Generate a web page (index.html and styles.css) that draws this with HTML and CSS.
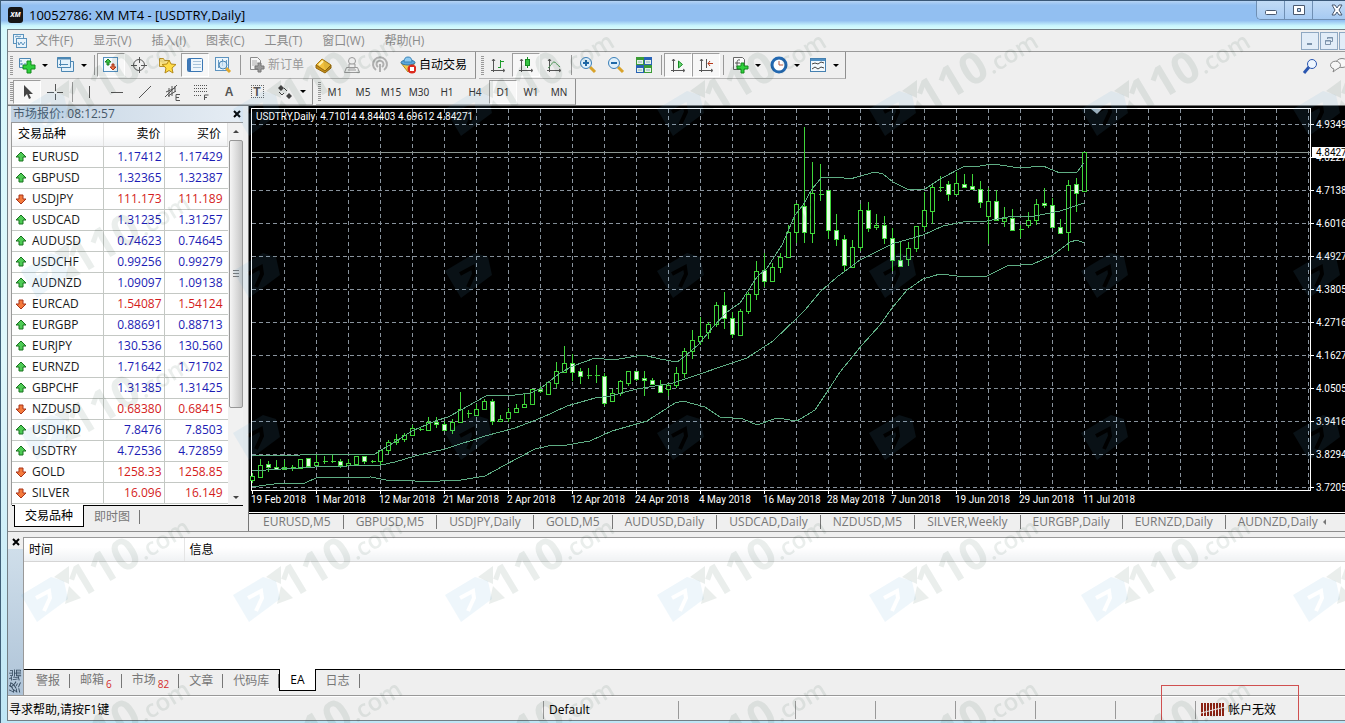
FILE: index.html
```html
<!DOCTYPE html>
<html lang="zh-CN">
<head>
    <meta charset="UTF-8">
    <meta name="viewport" content="width=device-width, initial-scale=1.0">
    <title>10052786: XM MT4 - [USDTRY,Daily]</title>
    <link rel="stylesheet" href="styles.css">
</head>
<body>
    <div class="window">
        <header class="titlebar">
            <span class="logo">XM</span>
            <h1>10052786: XM MT4 - [USDTRY,Daily]</h1>
            <div class="window-buttons">
                <button aria-label="最小化"><svg width="14" height="14"><rect x="1.500" y="7.500" width="11" height="4" rx="1" fill="#fff" stroke="#4b5a70"/></svg></button>
                <button aria-label="还原"><svg width="14" height="14"><path d="M1.500 2.500h11v9h-11zM5.500 5.500v3h3v-3z" fill="#fff" fill-rule="evenodd" stroke="#4b5a70"/></svg></button>
                <button class="wide" aria-label="关闭"><svg width="14" height="14"><path d="M2 2h3l2 3 2-3h3L9 7l3 5H9L7 9l-2 3H2l3-5z" fill="#fff" stroke="#4b5a70"/></svg></button>
            </div>
        </header>

        <div class="app">
            <nav class="menubar">
                <svg width="16" height="16" fill="#e8f3fb" stroke="#5b93bd"><rect x="1.500" y="1.500" width="10" height="9"/><rect x="4.500" y="5.500" width="10" height="9"/><path d="M3 4l2-1 2 1 2-1M6 9l1 3 2-3 2 3 2-3" fill="none"/></svg>
                <button>文件(F)</button>
                <button>显示(V)</button>
                <button>插入(I)</button>
                <button>图表(C)</button>
                <button>工具(T)</button>
                <button>窗口(W)</button>
                <button>帮助(H)</button>
                <div class="mdi-buttons">
                    <button aria-label="最小化图表"><svg width="12" height="12"><path d="M3 9h5" stroke="#7c93ab" stroke-width="2"/></svg></button>
                    <button aria-label="还原图表"><svg width="12" height="12" fill="none" stroke="#7c93ab"><path d="M4.500 4V2.500h5v4H8M2.500 5.500h5v4h-5zM2 6h6M4 3h6"/></svg></button>
                    <button aria-label="关闭图表"></button>
                </div>
            </nav>

            <div class="toolbar">
                <div class="group">
                    <i class="grip"></i>
                    <button class="tool" aria-label="新图表"><svg width="20" height="18"><path d="M2.500 2.500h11v9h-11z" fill="#eaf5fc" stroke="#4d87b3"/><path d="M4 4v6M4 8h8" stroke="#4d87b3" stroke-dasharray="2 1"/><path d="M10 5h4v4h4v4h-4v4h-4v-4H6V9h4z" fill="#2fd03c" stroke="#128a1c"/></svg></button>
                    <button class="arrow" aria-label="新图表列表"></button>
                    <button class="tool" aria-label="配置文件"><svg width="20" height="18" fill="#e3f1fb" stroke="#4d87b3"><path d="M5.500 5.500h12v10h-12z"/><path d="M1.500 1.500h13v10h-13z"/><path d="M1 2.500h14" stroke-width="2"/><path d="M4.500 4v6M3 8.500h9"/></svg></button>
                    <button class="arrow" aria-label="配置文件列表"></button>
                    <i class="sep"></i>
                    <button class="tool on" aria-label="市场报价"><svg width="18" height="18"><rect x="1.500" y="1.500" width="14" height="14" fill="#f4fafe" stroke="#5590bf"/><path d="M6 3l3 3H7v3H5V6H3z" fill="#3bc447" stroke="#16801f"/><path d="M11 14l3-3h-2V8h-2v3H8z" fill="#f4794a" stroke="#b5391a"/></svg></button>
                    <button class="tool" aria-label="数据窗口"><svg width="18" height="18" fill="none" stroke="#555"><circle cx="9" cy="9" r="5.500"/><path d="M9.500 1v6M9.500 11v6M1 9.500h6M11 9.500h6"/></svg></button>
                    <button class="tool" aria-label="导航"><svg width="20" height="18"><path d="M2.500 10.500v-8h4l1 2h5v6z" fill="#fce48a" stroke="#b9922b"/><path d="M12 4l2 4 5 .5-4 3.500 1 5-4-2.500L8 17l1-5-4-3.500 5-.5z" fill="#ffdc47" stroke="#b58a18"/></svg></button>
                    <button class="tool on" aria-label="终端"><svg width="18" height="16"><rect x="1.500" y="1.500" width="15" height="13" rx="1" fill="#eef6fc" stroke="#3a76b3"/><path d="M2 2h3v12H2z" fill="#3f78b8"/><path d="M7 4.500h8M7 7.500h8M7 10.500h8" stroke="#a8c3da"/></svg></button>
                    <button class="tool" aria-label="策略测试"><svg width="18" height="18"><rect x="1.500" y="1.500" width="13" height="13" fill="#edf6fc" stroke="#5d93bf"/><path d="M4.500 4v8M8.500 3v7M12.500 4v6" stroke="#6a9cc4"/><path d="M12 12l4 4" stroke="#e0a82e" stroke-width="3"/><circle cx="9" cy="9" r="4" fill="#cfe6f5" fill-opacity=".7" stroke="#4a86b5"/></svg></button>
                    <i class="sep"></i>
                    <button class="tool text off"><svg width="16" height="18"><path d="M1.500 1.500h7l3 3v9h-10z" fill="#f6f6f6" stroke="#8b8b8b"/><path d="M3 5h5M3 7h6M3 9h5" stroke="#aaa"/><path d="M9 7h3v3h3v3h-3v3H9v-3H6v-3h3z" fill="#9a9a9a" stroke="#777"/></svg>新订单</button>
                    <button class="tool" aria-label="编辑器"><svg width="18" height="18"><path d="M1 9l6-6 9 6-6 6z" fill="#f3c13d" stroke="#a97812"/><path d="M1 9v3l9 5 6-5V9l-6 6z" fill="#c78f1b" stroke="#95680d"/><path d="M4 9l4-4" stroke="#fff3b5" stroke-width="2"/></svg></button>
                    <button class="tool" aria-label="交易商店"><svg width="18" height="18" fill="#eee" stroke="#999"><circle cx="9" cy="5" r="3.500"/><path d="M6 8h6v4H6zM3.500 11.500h11l2 5h-15z"/><path d="M5 14h8"/></svg></button>
                    <button class="tool" aria-label="信号"><svg width="18" height="18" fill="none" stroke="#b0b0b0" stroke-width="2"><path d="M5 14a7 7 0 1 1 8 0"/><path d="M7 11a3.500 3.500 0 1 1 4 0M9 8v8"/></svg></button>
                    <button class="tool text"><svg width="16" height="18"><path d="M1 7l7 9 7-9z" fill="#f2c94c" stroke="#b48a20"/><ellipse cx="8" cy="6.500" rx="7" ry="2.500" fill="#5ba7dc" stroke="#2f75a8"/><path d="M4 6q0-5 4-5t4 5z" fill="#8ecaf0" stroke="#3a83b7"/><circle cx="12" cy="13" r="4.500" fill="#dc2b1f"/><rect x="10" y="11" width="4" height="4" fill="#fff"/></svg>自动交易</button>
                </div>
                <div class="group">
                    <i class="grip"></i>
                    <button class="tool" aria-label="柱状图"><svg width="18" height="18" fill="none" stroke="#555"><path d="M4.500 3v13M2 14.500h13M3 5l1.500-2L6 5M14 13l2 1.500-2 1.500"/><path d="M11.500 4v8M9 11.500h2M12 5.500h3" stroke="#1d9b2b"/></svg></button>
                    <button class="tool on" aria-label="蜡烛图"><svg width="18" height="18" fill="none" stroke="#555"><path d="M4.500 3v13M2 14.500h13M3 5l1.500-2L6 5M14 13l2 1.500-2 1.500"/><path d="M10.500 1v11" stroke="#168a22"/><rect x="8.500" y="3.500" width="4" height="6" fill="#35c442" stroke="#168a22"/></svg></button>
                    <button class="tool" aria-label="折线图"><svg width="18" height="18" fill="none" stroke="#555"><path d="M4.500 3v13M2 14.500h13M3 5l1.500-2L6 5M14 13l2 1.500-2 1.500"/><path d="M3 12c3-2 4-6 6-6s3 3 6 5" stroke="#4b9a55"/></svg></button>
                    <i class="sep"></i>
                    <button class="tool" aria-label="放大"><svg width="18" height="18"><path d="M11 11l5 5" stroke="#d9a32b" stroke-width="3"/><circle cx="7" cy="7" r="5.500" fill="#dff0fb" stroke="#3b7fb8"/><path d="M4 7h6M7 4v6" stroke="#1f69a8" stroke-width="2"/></svg></button>
                    <button class="tool" aria-label="缩小"><svg width="18" height="18"><path d="M11 11l5 5" stroke="#d9a32b" stroke-width="3"/><circle cx="7" cy="7" r="5.500" fill="#dff0fb" stroke="#3b7fb8"/><path d="M4 7h6" stroke="#1f69a8" stroke-width="2"/></svg></button>
                    <button class="tool" aria-label="平铺窗口"><svg width="18" height="18"><path d="M1 1h8v8H1zM9 9h8v8H9z" fill="#3b9b35"/><path d="M9 1h8v8H9zM1 9h8v8H1z" fill="#2862b5"/><path d="M2 4h6v4H2zM10 4h6v4h-6zM2 12h6v4H2zM10 12h6v4h-6z" fill="#e6f2e9"/><path d="M3 6h4M11 6h4M3 14h4M11 14h4" stroke="#8ab0b8"/></svg></button>
                    <i class="sep"></i>
                    <button class="tool on" aria-label="自动滚动"><svg width="18" height="18" fill="none" stroke="#555"><path d="M4.500 3v13M2 14.500h13M3 5l1.500-2L6 5M14 13l2 1.500-2 1.500"/><path d="M9.500 5v7l4-3.500z" fill="#6bd775" stroke="#168a22"/></svg></button>
                    <button class="tool on" aria-label="图表平移"><svg width="18" height="18" fill="none" stroke="#555"><path d="M4.500 3v13M2 14.500h13M3 5l1.500-2L6 5M14 13l2 1.500-2 1.500M9.500 3v9"/><path d="M16 7.500h-5M13 5l-2 2.500 2 2.500" stroke="#b5391a"/></svg></button>
                    <i class="sep"></i>
                    <button class="tool" aria-label="技术指标"><svg width="18" height="18"><path d="M2.500 1.500h9l2 2v10h-11z" fill="#fafafa" stroke="#666"/><path d="M9 4q-3-1-3 3v4M4 7h5" fill="none" stroke="#555"/><path d="M10 7h3v3h4v3h-4v4h-3v-4H6v-3h4z" fill="#2fd03c" stroke="#128a1c"/></svg></button>
                    <button class="arrow" aria-label="技术指标列表"></button>
                    <button class="tool" aria-label="时间周期"><svg width="18" height="18"><circle cx="9" cy="9" r="7" fill="#fff" stroke="#2368b0" stroke-width="3"/><path d="M9 5v4h4" fill="none" stroke="#b5543a"/></svg></button>
                    <button class="arrow" aria-label="时间周期列表"></button>
                    <button class="tool" aria-label="模板"><svg width="18" height="16"><rect x="1.500" y="1.500" width="15" height="13" fill="#f2f9fe" stroke="#4580b0"/><path d="M2 3h14" stroke="#4f90c4" stroke-width="2"/><path d="M3 7l3-1 3 1 3-2 3 1M3 12l3-2 3 2 3-2 3 1" fill="none" stroke="#444"/></svg></button>
                    <button class="arrow" aria-label="模板列表"></button>
                </div>
                <div class="corner-tools">
                    <button class="tool" aria-label="搜索"><svg width="18" height="18" fill="none" stroke="#2a56b0"><path d="M7 10l-5 6" stroke-width="3"/><circle cx="10" cy="7" r="4.500" fill="#eef6ff"/></svg></button>
                    <button class="tool" aria-label="聊天"><svg width="20" height="18" fill="#f7f7f7" stroke="#888"><ellipse cx="13" cy="6" rx="6" ry="4.500"/><path d="M4 15l1-3a5 4 0 1 1 3 0z"/></svg></button>
                </div>
            </div>

            <div class="toolbar">
                <div class="group">
                    <i class="grip"></i>
                    <button class="tool on" aria-label="光标"><svg width="18" height="18"><path d="M6 2v12l3-3 2 5 2-1-2-4h4z" fill="#444"/></svg></button>
                    <button class="tool" aria-label="十字准线"><svg width="18" height="18" stroke="#555"><path d="M9.500 1v7M9.500 11v6M1 9.500h7M11 9.500h6"/></svg></button>
                    <i class="sep"></i>
                    <button class="tool" aria-label="垂直线"><svg width="18" height="18"><path d="M9.500 3v12" stroke="#555"/></svg></button>
                    <button class="tool" aria-label="水平线"><svg width="18" height="18"><path d="M3 9.500h12" stroke="#555"/></svg></button>
                    <button class="tool" aria-label="趋势线"><svg width="18" height="18"><path d="M3 15L15 3" stroke="#555"/></svg></button>
                    <button class="tool" aria-label="等距通道"><svg width="20" height="18" fill="none" stroke="#555"><path d="M2 14L14 2M3 9l9-4M5 13l8-5M6 5v9M9 3v10M12 3v6"/><path d="M17 11.500h-4v6h4M13 14.500h3"/></svg></button>
                    <button class="tool" aria-label="斐波纳契"><svg width="18" height="18" fill="none" stroke="#555"><path d="M2 2.500h13M2 5.500h13M2 8.500h13M2 12.500h8" stroke-dasharray="1 1"/><path d="M12.500 17v-5h4M12 14.500h3"/></svg></button>
                    <button class="tool letter">A</button>
                    <button class="tool letter"><span class="boxed">T</span></button>
                    <button class="tool" aria-label="箭头"><svg width="18" height="18" fill="#444"><path d="M5 2l3 3-3 3-3-3zM13 10l3 3-3 3-3-3z"/><path d="M3 9l3 3 2-2M8 5l3 3" fill="none" stroke="#444"/></svg></button>
                    <button class="arrow" aria-label="箭头列表"></button>
                </div>
                <div class="group">
                    <i class="grip"></i>
                    <button class="tool period">M1</button>
                    <button class="tool period">M5</button>
                    <button class="tool period">M15</button>
                    <button class="tool period">M30</button>
                    <button class="tool period">H1</button>
                    <button class="tool period">H4</button>
                    <button class="tool period on">D1</button>
                    <button class="tool period">W1</button>
                    <button class="tool period">MN</button>
                </div>
            </div>

            <main class="workspace">
                <section class="market">
                    <div class="panel-title">
                        <h2>市场报价: 08:12:57</h2>
                        <button class="close" aria-label="关闭市场报价"><svg width="8" height="8"><path d="M1 1l6 6M7 1L1 7" stroke="#000" stroke-width="2"/></svg></button>
                    </div>
                    <div class="quotes">
                        <table>
                            <thead>
                                <tr><th>交易品种</th><th>卖价</th><th>买价</th></tr>
                            </thead>
                            <tbody id="quoteRows"></tbody>
                        </table>
                        <div class="scrollbar">
                            <button class="up" aria-label="向上滚动"></button>
                            <div class="thumb"></div>
                            <button class="down" aria-label="向下滚动"></button>
                        </div>
                    </div>
                    <div class="tabs">
                        <button class="active">交易品种</button>
                        <button>即时图</button>
                    </div>
                </section>

                <section class="charts">
                    <svg id="chart" class="chart" role="img" aria-label="USDTRY,Daily"></svg>
                    <div class="chart-tabs">
                        <button>EURUSD,M5</button>
                        <button>GBPUSD,M5</button>
                        <button>USDJPY,Daily</button>
                        <button>GOLD,M5</button>
                        <button>AUDUSD,Daily</button>
                        <button>USDCAD,Daily</button>
                        <button>NZDUSD,M5</button>
                        <button>SILVER,Weekly</button>
                        <button>EURGBP,Daily</button>
                        <button>EURNZD,Daily</button>
                        <button>AUDNZD,Daily</button>
                        <button class="prev" aria-label="上一个"></button>
                    </div>
                </section>
            </main>

            <section class="terminal">
                <div class="side">
                    <button class="close" aria-label="关闭终端"><svg width="8" height="8"><path d="M1 1l6 6M7 1L1 7" stroke="#000" stroke-width="2"/></svg></button>
                    <span>终端</span>
                </div>
                <div class="journal">
                    <table>
                        <thead><tr><th class="time">时间</th><th>信息</th></tr></thead>
                    </table>
                    <div class="tabs">
                        <button>警报</button>
                        <button>邮箱<sub>6</sub></button>
                        <button>市场<sub>82</sub></button>
                        <button>文章</button>
                        <button>代码库</button>
                        <button class="active">EA</button>
                        <button>日志</button>
                    </div>
                </div>
            </section>

            <footer class="status">
                <span class="help">寻求帮助,请按F1键</span>
                <span class="profile">Default</span>
                <span class="date"></span>
                <span></span>
                <span></span>
                <span></span>
                <span></span>
                <span></span>
                <span class="account">
                    <svg width="24" height="14"><path d="M1 0v13M4 0v13M7 0v13M10 0v13M13 0v13M16 0v13M19 0v13M22 0v13" stroke="#8c2314" stroke-width="2"/><path d="M0 10l24-6" stroke="#efefef"/></svg>
                    帐户无效
                </span>
                <i class="highlight"></i>
            </footer>
        </div>

        <svg class="watermark" id="markLogos" aria-hidden="true"></svg>
        <svg class="watermark multiply" id="markTexts" aria-hidden="true"></svg>
    </div>

    <script src="script.js"></script>
</body>
</html>
```
FILE: styles.css
```css
* {
    box-sizing: border-box;
}
body {
    margin: 0;
    font-family: "Open Sans", "Noto Sans CJK SC", sans-serif;
    font-size: 12px;
    line-height: 16px;
    color: #000;
    background: #efefef;
    overflow: hidden;
}
button {
    font: inherit;
    color: inherit;
    padding: 0;
    border: none;
    background: none;
    white-space: nowrap;
    flex: none;
}
svg {
    flex: none;
}
h1, h2 {
    font-size: 12px;
    font-weight: normal;
    margin: 0;
}
table {
    border-collapse: collapse;
}
th {
    font-weight: normal;
    text-align: left;
}
.window {
    position: relative;
    display: flex;
    flex-direction: column;
    min-height: 100vh;
    overflow: hidden;
    border-left: 1px solid #3f5f78;
    padding: 0 0 2px 6px;
    background: linear-gradient(#d5f8fc, #dff7fb 50%, #bfe6f5);
}

/* title bar */
.titlebar {
    display: flex;
    align-items: center;
    height: 29px;
    margin-left: -6px;
    padding-left: 7px;
    border-top: 1px solid #3a5878;
    background: linear-gradient(#b5d3f3, #92bff1 15%, #92bff1 70%, #c8f5fd 88%, #d8fbfd);
}
.titlebar h1 {
    font-size: 13px;
}
.logo {
    width: 15px;
    height: 16px;
    margin-right: 6px;
    border-radius: 3px;
    background: #151515;
    color: #fff;
    font-size: 7px;
    font-weight: bold;
    font-style: italic;
    text-align: center;
}
.window-buttons {
    display: flex;
    align-self: flex-start;
    width: 89px;
    height: 19px;
    margin-left: auto;
    overflow: hidden;
    border: 1px solid #6f8fb3;
    border-top: none;
    border-right: none;
    border-radius: 0 0 0 5px;
}
.window-buttons button {
    display: flex;
    align-items: center;
    justify-content: center;
    width: 28px;
    border-right: 1px solid #6f8fb3;
    background: linear-gradient(#c2dbf5, #a6caf2);
}
.window-buttons .wide {
    width: 48px;
}

/* menu */
.app {
    flex: 1;
    display: flex;
    flex-direction: column;
    min-width: 0;
    border: 1px solid #737f86;
    border-right: none;
    background: #efefef;
}
.menubar {
    display: flex;
    align-items: center;
    height: 22px;
    padding-left: 4px;
    border-bottom: 1px solid #9a9a9a;
    color: #8b8b8b;
}
.menubar > svg {
    margin-right: -2px;
}
.menubar > button {
    padding: 0 10px;
}
.mdi-buttons {
    display: flex;
    gap: 1px;
    width: 44px;
    margin-left: auto;
    overflow: hidden;
}
.mdi-buttons button {
    width: 18px;
    height: 18px;
    border: 1px solid #8fa8c2;
    background: #e2edf8;
}
.mdi-buttons svg {
    display: block;
    margin: auto;
}

/* toolbars */
.toolbar {
    display: flex;
    height: 27px;
}
.toolbar + .toolbar {
    height: 26px;
}
.group {
    display: flex;
    align-items: center;
    padding-right: 2px;
    margin-right: 3px;
    border-right: 1px solid #8f8f8f;
    border-bottom: 1px solid #b5b5b5;
}
.grip {
    width: 3px;
    height: 19px;
    margin-left: 2px;
    background: repeating-linear-gradient(#999 0 1px, #efefef 1px 2px);
}
.sep {
    width: 1px;
    height: 20px;
    margin: 0 2px 0 3px;
    background: #999;
}
.tool {
    display: flex;
    align-items: center;
    justify-content: center;
    width: 28px;
    height: 24px;
}
.tool.on {
    border: 1px solid #9d9d9d;
    border-right-color: #fff;
    border-bottom-color: #fff;
    background: #f7f7f7;
}
.tool.text {
    width: auto;
    gap: 3px;
    padding: 0 6px;
}
.tool.off {
    color: #999;
}
.arrow {
    width: 8px;
    height: 24px;
    margin-right: 3px;
}
.arrow::before {
    content: "";
    display: block;
    margin: auto;
    width: 0;
    border: 3px solid transparent;
    border-top-color: #000;
    border-bottom: none;
}
.letter {
    font-family: "Liberation Sans", sans-serif;
    font-weight: bold;
    color: #555;
}
.boxed {
    width: 13px;
    height: 13px;
    line-height: 12px;
    border: 1px dotted #666;
}
.period {
    font-family: "Noto Sans", sans-serif;
    font-size: 10px;
    color: #333;
}
.corner-tools {
    display: flex;
    align-items: center;
    width: 48px;
    margin-left: auto;
    overflow: hidden;
}

/* market watch */
.workspace {
    display: flex;
    height: 427px;
    border-top: 1px solid #777;
    border-bottom: 1px solid #8d8d8d;
}
.market {
    display: flex;
    flex-direction: column;
    width: 240px;
    padding: 0 5px 0 3px;
    flex: none;
}
.panel-title {
    display: flex;
    align-items: center;
    justify-content: space-between;
    height: 16px;
    padding: 0 1px 0 2px;
    background: linear-gradient(90deg, #c3d3e3, #e6edf4);
    color: #46586a;
}
.close {
    display: flex;
    align-items: center;
    justify-content: center;
    width: 10px;
    height: 10px;
}
.quotes {
    display: flex;
    height: 383px;
    border-left: 1px solid #999;
    border-top: 1px solid #999;
    background: #fff;
}
.quotes table {
    width: 216px;
    height: 380px;
    table-layout: fixed;
}
.quotes th {
    height: 23px;
    padding: 0 6px;
    border-bottom: 1px solid #ccc;
    border-right: 1px solid #e2e2e2;
    background: linear-gradient(#fff 50%, #f1f2f4);
}
.quotes th:first-child {
    width: 91px;
}
.quotes th:nth-child(2) {
    width: 61px;
    padding-right: 3px;
}
.quotes th + th {
    text-align: right;
}
.quotes td {
    height: 21px;
    padding: 0 2px;
    border: 1px solid #c4c8c4;
    border-left: none;
    text-align: right;
    color: #1c1cb4;
}
.quotes td:first-child {
    text-align: left;
    color: #1a1a1a;
}
.quotes td:last-child {
    padding-right: 5px;
    border-right: none;
}
.quotes .falling {
    color: #d41c1c;
}
.quotes td svg {
    vertical-align: -2px;
    margin: 0 5px 0 1px;
}
.scrollbar {
    display: flex;
    flex-direction: column;
    align-items: center;
    width: 15px;
    padding-bottom: 4px;
    background: #f1f1f1;
}
.scrollbar button {
    height: 17px;
    width: 0;
}
.up::before, .down::before {
    content: "";
    display: block;
    width: 0;
    margin-left: -3px;
    border: 3px solid transparent;
}
.up::before {
    border-top: none;
    border-bottom-color: #444;
}
.scrollbar .down {
    height: 8px;
    margin-top: auto;
}
.down::before {
    border-bottom: none;
    border-top-color: #444;
}
.thumb {
    width: 14px;
    height: 268px;
    border: 1px solid #979797;
    border-radius: 2px;
    background:
        repeating-linear-gradient(#777 0 1px, transparent 1px 3px) center / 6px 8px no-repeat,
        linear-gradient(90deg, #f5f5f5, #d9d9d9 60%, #c5c5c5);
}
.tabs {
    display: flex;
    align-items: flex-start;
    height: 26px;
    border-top: 1px solid #000;
    color: #777;
}
.tabs button {
    position: relative;
    height: 21px;
    padding: 0 10px;
}
.tabs button:not(.active)::after {
    content: "";
    position: absolute;
    right: 0;
    top: 4px;
    height: 14px;
    border-right: 1px solid #777;
}
.tabs .active {
    margin-top: -1px;
    height: 22px;
    border: 1px solid #000;
    border-top: none;
    background: #fff;
    color: #000;
}
.market .tabs {
    margin-left: 1px;
    padding-left: 2px;
}

/* chart */
.charts {
    display: flex;
    flex-direction: column;
    flex: 1;
    min-width: 0;
    border-left: 1px solid #777;
}
.chart {
    display: block;
    width: 100%;
    height: 406px;
    background: #000;
    font-family: Roboto, sans-serif;
    font-size: 10px;
    fill: #fff;
}
.chart .grid {
    stroke: #89939d;
    stroke-dasharray: 4 3;
}
.chart .frame {
    stroke: #fff;
    fill: none;
}
.chart .price {
    stroke: #8c9691;
}
.chart .band {
    fill: none;
    stroke: #5fae84;
}
.chart .candle {
    stroke: #3fd63a;
    fill: #000;
}
.chart .bear {
    fill: #e6ffe6;
}
.chart .current {
    fill: #000;
}
.chart-tabs {
    display: flex;
    align-items: center;
    height: 19px;
    padding-left: 2px;
    border-top: 1px solid #fff;
    box-shadow: inset 0 1px #000;
    color: #777;
    overflow: hidden;
}
.chart-tabs button {
    padding: 0 12px;
    line-height: 14px;
    border-right: 1px solid #777;
}
.chart-tabs button:nth-last-child(2) {
    padding-right: 5px;
    border-right: none;
}
.chart-tabs .prev {
    width: 0;
    padding: 0;
    border: 3px solid transparent;
    border-left: none;
    border-right-color: #777;
}

/* terminal */
.terminal {
    display: flex;
    flex: 1;
    padding-top: 5px;
    border-bottom: 1px solid #999;
}
.side {
    display: flex;
    flex-direction: column;
    align-items: center;
    justify-content: space-between;
    width: 15px;
    padding-bottom: 2px;
    background: linear-gradient(#efefef 12px, #cfdeea 12px, #afc4d8);
}
.side span {
    writing-mode: vertical-rl;
    text-orientation: sideways;
    transform: rotate(180deg);
    line-height: 14px;
    color: #34495e;
}
.journal {
    display: flex;
    flex-direction: column;
    flex: 1;
    border-left: 1px solid #999;
    border-top: 1px solid #999;
    background: #fff;
}
.journal table {
    width: 100%;
    margin-bottom: auto;
}
.journal th {
    height: 23px;
    padding: 1px 5px 0;
    border-bottom: 1px solid #d5d5d5;
    background: linear-gradient(#fff 40%, #f0f2f4);
}
.journal .time {
    width: 160px;
    border-right: 1px solid #e5e5e5;
}
.journal .tabs {
    padding-left: 2px;
    background: #efefef;
}
sub {
    margin-left: 2px;
    font-size: 10px;
    line-height: 10px;
    color: #d42a2a;
}

/* status bar */
.status {
    position: relative;
    display: flex;
    align-items: center;
    height: 24px;
    padding-top: 2px;
    border-top: 1px solid #fff;
}
.status span {
    flex: 0 0 80px;
    height: 18px;
    line-height: 18px;
    padding-left: 5px;
    border-left: 1px solid #999;
}
.status .help {
    flex-basis: 535px;
    padding-left: 1px;
    border-left: none;
}
.status .profile {
    flex-basis: 135px;
}
.status .date {
    flex-basis: 117px;
}
.status .account {
    display: flex;
    align-items: center;
    gap: 3px;
    flex: 1;
}
.highlight {
    position: absolute;
    left: 1153px;
    bottom: 0;
    width: 138px;
    height: 35px;
    border: 1px solid #d05050;
    border-bottom: none;
}

/* tiled watermark over the whole window */
.watermark {
    position: absolute;
    left: 0;
    top: 30px;
    width: 100%;
    height: calc(100% - 30px);
    pointer-events: none;
    fill: #829a90;
    fill-opacity: .17;
}
.multiply {
    mix-blend-mode: multiply;
}
.mark-number {
    font-size: 44px;
    font-weight: bold;
}
.mark-com {
    font-size: 24px;
    font-weight: 600;
}
```
FILE: script.js
```js
const quotes = [
    ['EURUSD', '1.17412', '1.17429', 1],
    ['GBPUSD', '1.32365', '1.32387', 1],
    ['USDJPY', '111.173', '111.189', 0],
    ['USDCAD', '1.31235', '1.31257', 1],
    ['AUDUSD', '0.74623', '0.74645', 1],
    ['USDCHF', '0.99256', '0.99279', 1],
    ['AUDNZD', '1.09097', '1.09138', 1],
    ['EURCAD', '1.54087', '1.54124', 0],
    ['EURGBP', '0.88691', '0.88713', 1],
    ['EURJPY', '130.536', '130.560', 1],
    ['EURNZD', '1.71642', '1.71702', 1],
    ['GBPCHF', '1.31385', '1.31425', 1],
    ['NZDUSD', '0.68380', '0.68415', 0],
    ['USDHKD', '7.8476', '7.8503', 1],
    ['USDTRY', '4.72536', '4.72859', 1],
    ['GOLD', '1258.33', '1258.85', 0],
    ['SILVER', '16.096', '16.149', 0]
];

const upArrow = '<svg width="12" height="12"><path d="M6 1l5 5H8v4H4V6H1z" fill="#4ecb55" stroke="#16701d"/></svg>';
const downArrow = '<svg width="12" height="12"><path d="M6 11l5-5H8V2H4v4H1z" fill="#f47a3c" stroke="#a8351a"/></svg>';

document.getElementById('quoteRows').innerHTML = quotes.map(([name, bid, ask, up]) => {
    let cls = up ? 'rising' : 'falling';
    return `<tr><td>${up ? upArrow : downArrow}${name}</td><td class="${cls}">${bid}</td><td class="${cls}">${ask}</td></tr>`;
}).join('');

// high, body top, body bottom, low, falling
const candles = [
    [473,476,480,482,0],[459,465,477,477,0],[461,464,467,471,1],[460,467,469,469,1],[460,467,469,469,0],
    [465,467,467,470,0],[459,459,468,468,0],[458,458,466,466,1],[455,462,465,465,0],[456,461,461,463,0],
    [455,461,461,462,0],[459,461,465,467,1],[459,463,465,465,0],[456,456,464,464,0],[456,456,461,463,1],
    [460,461,461,462,0],[450,450,461,464,0],[440,442,450,453,0],[434,439,442,444,0],[433,435,439,441,0],
    [425,428,435,435,0],[428,429,429,430,0],[417,422,430,430,0],[417,422,424,427,1],[421,424,430,430,1],
    [419,422,430,433,0],[392,409,422,422,0],[410,413,413,417,0],[404,409,415,415,0],[399,401,409,409,0],
    [399,401,421,424,1],[415,419,421,421,0],[408,412,418,421,0],[404,408,412,412,0],[394,404,407,407,0],
    [389,389,404,404,0],[386,389,391,392,1],[382,382,394,394,0],[362,371,383,387,0],[346,363,372,372,0],
    [354,363,372,380,1],[368,371,376,383,1],[368,375,375,378,0],[365,375,375,382,0],[373,376,403,405,1],
    [389,393,401,401,0],[380,381,393,395,0],[371,371,383,385,0],[371,371,379,380,1],[371,378,380,395,1],
    [378,380,384,384,1],[380,385,392,392,1],[383,385,389,395,0],[367,373,385,387,0],[348,351,373,377,0],
    [330,340,351,358,0],[317,336,341,344,0],[322,324,332,338,0],[302,305,324,326,0],[292,305,318,328,1],
    [312,318,334,337,1],[309,311,335,335,0],[292,294,311,313,0],[261,271,294,299,0],[253,270,281,286,1],
    [263,267,281,281,0],[253,257,267,272,0],[225,232,257,257,0],[203,204,232,242,0],[127,206,232,242,1],
    [162,193,233,242,0],[164,194,194,200,0],[190,190,230,238,1],[214,230,239,245,1],[235,239,265,271,1],
    [240,247,267,267,0],[204,210,247,250,0],[202,210,228,231,1],[214,225,227,229,0],[216,225,238,243,1],
    [228,238,260,270,1],[242,260,266,266,1],[242,248,259,265,0],[226,226,248,251,0],[192,210,226,230,0],
    [185,187,211,223,0],[176,187,187,191,0],[181,184,194,200,1],[172,183,194,194,0],[174,184,187,187,1],
    [174,186,189,189,1],[181,189,202,207,1],[188,201,216,243,0],[190,201,220,220,1],[207,218,221,226,0],
    [209,218,230,230,1],[225,229,229,237,0],[212,220,225,227,0],[199,204,220,224,0],[188,203,205,207,1],
    [198,205,227,227,1],[219,227,233,233,1],[180,185,232,250,0],[178,184,193,211,1],[152,152,191,191,0]
];

const bands = [
    '252,455 300,455 340,454 375,454 381,450 395,442 412,431 435,421 448,417 461,410 475,402 486,396 515,395 531,393 541,388 560,373 573,366 595,358 613,360 643,355 660,359 677,362 684,357 698,345 713,327 727,312 740,303 757,277 767,268 782,245 795,215 803,205 812,189 822,177 837,177 850,179 875,172 883,174 893,182 907,189 925,189 940,179 963,167 980,166 993,164 1020,168 1043,166 1060,173 1077,172 1084,163',
    '252,471 281,469 315,467 381,465 395,462 415,456 445,449 485,436 515,428 541,418 567,406 595,398 610,396 637,389 673,383 700,374 723,366 747,358 773,341 797,318 805,310 820,292 837,277 860,260 892,244 923,235 943,226 963,222 987,221 1013,216 1030,217 1060,211 1084,203',
    '252,487 281,483 305,483 316,478 371,477 386,480 415,481 430,482 451,480 461,480 485,476 505,465 535,449 548,446 567,445 590,441 612,431 647,421 675,403 683,401 705,407 720,417 743,419 757,425 777,418 797,421 815,410 827,392 840,372 862,345 880,325 892,308 907,290 923,279 940,274 957,276 987,276 1007,266 1033,264 1053,255 1070,242 1077,240 1084,243'
];

const prices = ['4.93490', '4.82270', '4.71380', '4.60160', '4.49270', '4.38050', '4.27160', '4.16270', '4.05050', '3.94160', '3.82940', '3.72050'];
const dates = ['19 Feb 2018', '1 Mar 2018', '12 Mar 2018', '21 Mar 2018', '2 Apr 2018', '12 Apr 2018', '24 Apr 2018', '4 May 2018', '16 May 2018', '28 May 2018', '7 Jun 2018', '19 Jun 2018', '29 Jun 2018', '11 Jul 2018'];

function drawChart() {
    let out = '<g transform="translate(-249 -106)"><g shape-rendering="crispEdges">';
    for (let x = 284; x < 1310; x += 32) {
        out += `<path class="grid" d="M${x + 0.5} 109V490"/>`;
    }
    prices.forEach((p, i) => {
        out += `<path class="grid" d="M252 ${124.5 + i * 33}H1310"/><path class="frame" d="M1310 ${124.5 + i * 33}h4"/>`;
    });
    out += '<path class="price" d="M252 152.5H1310"/>';
    out += '<path class="frame" d="M251.5 108.5H1310.5V490.5H251.5Z"/>';
    candles.forEach(([high, top, bottom, low, bear], i) => {
        let x = 252.5 + i * 8;
        out += `<path class="candle" d="M${x} ${high}V${low + 1}"/>`;
        if (top === bottom) {
            out += `<path class="candle" d="M${x - 2} ${top + 0.5}h5"/>`;
        } else {
            out += `<rect class="candle${bear ? ' bear' : ''}" x="${x - 2}" y="${top + 0.5}" width="4" height="${bottom - top}"/>`;
        }
    });
    bands.forEach(points => {
        out += `<polyline class="band" points="${points}"/>`;
    });
    out += '</g>';
    dates.forEach((d, i) => {
        out += `<path class="frame" d="M${252.5 + i * 64} 490v4"/><text x="${251 + i * 64}" y="503">${d}</text>`;
    });
    prices.forEach((p, i) => {
        out += `<text x="1316" y="${128 + i * 33}">${p}</text>`;
    });
    out += '<path d="M1312 147h40v11h-40z"/><text class="current" x="1316" y="156">4.84271</text>';
    out += '<path d="M1091 109h11l-5 5z" fill="#9db0bd"/>';
    out += '<text x="256" y="120">USDTRY,Daily&#160; 4.71014 4.84403 4.69612 4.84271</text></g>';
    document.getElementById('chart').innerHTML = out;
}

function drawWatermark() {
    let logos = '<mask id="cut"><path d="M0 60h60v70H0z" fill="#fff" fill-opacity="1"/><path d="M15 98l13-7 1 7-6 13" fill="none" stroke="#000" stroke-width="4"/></mask>';
    let texts = '';
    let height = window.innerHeight;
    for (let y = 14; y < height; y += 162) {
        for (let x = -192; x < window.innerWidth; x += 212) {
            let place = `transform="translate(${x} ${y - 30})"`;
            logos += `<g ${place}><path mask="url(#cut)" d="M0 95l30-18 13 4 4 18-31 23z" fill="#5aa9dc" fill-opacity=".1"/></g>`;
            texts += `<g ${place}><path d="M33 77l15-11v18zM44 104l4-18 12 12z"/>
                <g transform="translate(58 100) rotate(-31)"><text class="mark-number">110</text><text class="mark-com" x="76">.com</text></g></g>`;
        }
    }
    document.getElementById('markLogos').innerHTML = logos;
    document.getElementById('markTexts').innerHTML = texts;
}

drawChart();
drawWatermark();
```
